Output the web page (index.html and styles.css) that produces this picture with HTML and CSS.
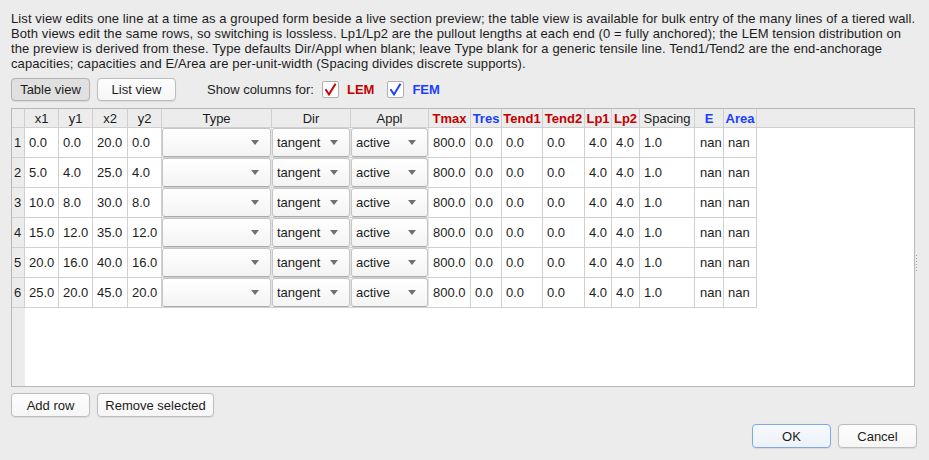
FILE: index.html
```html
<!DOCTYPE html><html lang="en"><head><meta charset="utf-8">
<meta name="viewport" content="width=device-width,initial-scale=1">
<title>Reinforcement lines</title>
<link rel="stylesheet" href="styles.css">
</head>
<body>
<div class="dialog">
  <p class="intro">List view edits one line at a time as a grouped form beside a live section preview; the table view is available for bulk entry of the many lines of a tiered wall.<br>Both views edit the same rows, so switching is lossless. Lp1/Lp2 are the pullout lengths at each end (0 = fully anchored); the LEM tension distribution on<br>the preview is derived from these. Type defaults Dir/Appl when blank; leave Type blank for a generic tensile line. Tend1/Tend2 are the end-anchorage<br>capacities; capacities and E/Area are per-unit-width (Spacing divides discrete supports).</p>

  <div class="toolbar">
    <button class="btn pressed">Table view</button>
    <button class="btn">List view</button>
    <span class="show-label">Show columns for:</span>
    <label class="chk lem">
      <span class="box"><svg width="15" height="15" viewBox="0 0 15 15"><path d="M2.5 7.2 L6 12.5 L12.5 1.8" fill="none" stroke="currentColor" stroke-width="2"/></svg></span>LEM
    </label>
    <label class="chk fem">
      <span class="box"><svg width="15" height="15" viewBox="0 0 15 15"><path d="M2.5 7.2 L6 12.5 L12.5 1.8" fill="none" stroke="currentColor" stroke-width="2"/></svg></span>FEM
    </label>
  </div>

  <div class="table-area">
    <div class="grid-frame">
      <div class="hdr">
        <div class="corner"></div>
        <div class="hc w-x1">x1</div><div class="hc w-y1">y1</div><div class="hc w-x2">x2</div><div class="hc w-y2">y2</div>
        <div class="hc w-type">Type</div><div class="hc w-dir">Dir</div><div class="hc w-appl">Appl</div>
        <div class="hc w-tmax lem-col">Tmax</div><div class="hc w-tres fem-col">Tres</div>
        <div class="hc w-tend1 lem-col">Tend1</div><div class="hc w-tend2 lem-col">Tend2</div>
        <div class="hc w-lp1 lem-col">Lp1</div><div class="hc w-lp2 lem-col">Lp2</div>
        <div class="hc w-spacing">Spacing</div><div class="hc w-e fem-col">E</div><div class="hc w-area fem-col">Area</div>
      </div>
      <div class="body">
        <div class="vhdr">
          <div class="rn">1</div><div class="rn">2</div><div class="rn">3</div>
          <div class="rn">4</div><div class="rn">5</div><div class="rn">6</div>
        </div>
        <div class="rows">
          <div class="row">
            <div class="c w-x1">0.0</div><div class="c w-y1">0.0</div><div class="c w-x2">20.0</div><div class="c w-y2">0.0</div>
            <div class="c w-type"><span class="combo"><span class="val"></span><i class="arr"></i></span></div>
            <div class="c w-dir"><span class="combo"><span class="val">tangent</span><i class="arr"></i></span></div>
            <div class="c w-appl"><span class="combo"><span class="val">active</span><i class="arr"></i></span></div>
            <div class="c w-tmax">800.0</div><div class="c w-tres">0.0</div><div class="c w-tend1">0.0</div><div class="c w-tend2">0.0</div>
            <div class="c w-lp1">4.0</div><div class="c w-lp2">4.0</div><div class="c w-spacing">1.0</div><div class="c w-e">nan</div><div class="c w-area">nan</div>
          </div>
          <div class="row">
            <div class="c w-x1">5.0</div><div class="c w-y1">4.0</div><div class="c w-x2">25.0</div><div class="c w-y2">4.0</div>
            <div class="c w-type"><span class="combo"><span class="val"></span><i class="arr"></i></span></div>
            <div class="c w-dir"><span class="combo"><span class="val">tangent</span><i class="arr"></i></span></div>
            <div class="c w-appl"><span class="combo"><span class="val">active</span><i class="arr"></i></span></div>
            <div class="c w-tmax">800.0</div><div class="c w-tres">0.0</div><div class="c w-tend1">0.0</div><div class="c w-tend2">0.0</div>
            <div class="c w-lp1">4.0</div><div class="c w-lp2">4.0</div><div class="c w-spacing">1.0</div><div class="c w-e">nan</div><div class="c w-area">nan</div>
          </div>
          <div class="row">
            <div class="c w-x1">10.0</div><div class="c w-y1">8.0</div><div class="c w-x2">30.0</div><div class="c w-y2">8.0</div>
            <div class="c w-type"><span class="combo"><span class="val"></span><i class="arr"></i></span></div>
            <div class="c w-dir"><span class="combo"><span class="val">tangent</span><i class="arr"></i></span></div>
            <div class="c w-appl"><span class="combo"><span class="val">active</span><i class="arr"></i></span></div>
            <div class="c w-tmax">800.0</div><div class="c w-tres">0.0</div><div class="c w-tend1">0.0</div><div class="c w-tend2">0.0</div>
            <div class="c w-lp1">4.0</div><div class="c w-lp2">4.0</div><div class="c w-spacing">1.0</div><div class="c w-e">nan</div><div class="c w-area">nan</div>
          </div>
          <div class="row">
            <div class="c w-x1">15.0</div><div class="c w-y1">12.0</div><div class="c w-x2">35.0</div><div class="c w-y2">12.0</div>
            <div class="c w-type"><span class="combo"><span class="val"></span><i class="arr"></i></span></div>
            <div class="c w-dir"><span class="combo"><span class="val">tangent</span><i class="arr"></i></span></div>
            <div class="c w-appl"><span class="combo"><span class="val">active</span><i class="arr"></i></span></div>
            <div class="c w-tmax">800.0</div><div class="c w-tres">0.0</div><div class="c w-tend1">0.0</div><div class="c w-tend2">0.0</div>
            <div class="c w-lp1">4.0</div><div class="c w-lp2">4.0</div><div class="c w-spacing">1.0</div><div class="c w-e">nan</div><div class="c w-area">nan</div>
          </div>
          <div class="row">
            <div class="c w-x1">20.0</div><div class="c w-y1">16.0</div><div class="c w-x2">40.0</div><div class="c w-y2">16.0</div>
            <div class="c w-type"><span class="combo"><span class="val"></span><i class="arr"></i></span></div>
            <div class="c w-dir"><span class="combo"><span class="val">tangent</span><i class="arr"></i></span></div>
            <div class="c w-appl"><span class="combo"><span class="val">active</span><i class="arr"></i></span></div>
            <div class="c w-tmax">800.0</div><div class="c w-tres">0.0</div><div class="c w-tend1">0.0</div><div class="c w-tend2">0.0</div>
            <div class="c w-lp1">4.0</div><div class="c w-lp2">4.0</div><div class="c w-spacing">1.0</div><div class="c w-e">nan</div><div class="c w-area">nan</div>
          </div>
          <div class="row">
            <div class="c w-x1">25.0</div><div class="c w-y1">20.0</div><div class="c w-x2">45.0</div><div class="c w-y2">20.0</div>
            <div class="c w-type"><span class="combo"><span class="val"></span><i class="arr"></i></span></div>
            <div class="c w-dir"><span class="combo"><span class="val">tangent</span><i class="arr"></i></span></div>
            <div class="c w-appl"><span class="combo"><span class="val">active</span><i class="arr"></i></span></div>
            <div class="c w-tmax">800.0</div><div class="c w-tres">0.0</div><div class="c w-tend1">0.0</div><div class="c w-tend2">0.0</div>
            <div class="c w-lp1">4.0</div><div class="c w-lp2">4.0</div><div class="c w-spacing">1.0</div><div class="c w-e">nan</div><div class="c w-area">nan</div>
          </div>
        </div>
      </div>
    </div>
    <div class="splitter"><i></i><i></i><i></i><i></i><i></i><i></i></div>
  </div>

  <div class="row-actions">
    <button class="btn add">Add row</button>
    <button class="btn remove">Remove selected</button>
  </div>

  <div class="dialog-buttons">
    <button class="btn default">OK</button>
    <button class="btn">Cancel</button>
  </div>
</div>
</body></html>
```

FILE: styles.css
```css
/* Qt-on-macOS style dialog */
:root{
  --win: #ececec;
  --grid: #d0d0d0;
  --frame: #b8b8b8;
  --text: #1c1c1c;
  --lem: #c40000;
  --fem: #1a3fff;
}
*{box-sizing:border-box}
body{margin:0;background:var(--win);color:var(--text);font-family:"Liberation Sans",Arial,sans-serif;font-size:13px}

.dialog{height:460px;padding:11px 12px 12px 11px;display:flex;flex-direction:column}
.intro{margin:0;line-height:15px;white-space:nowrap;letter-spacing:.1px}

.btn{
  font:inherit;color:var(--text);height:24px;padding:0;cursor:default;
  border:1px solid #bdbdbd;border-radius:4px;background:linear-gradient(#fdfdfd,#f6f6f6);
  box-shadow:0 .5px 1px rgba(0,0,0,.08);
}
.btn.pressed{background:#e0e0e0;border-color:#b3b3b3}
.btn.default{border-color:#7ea9e6;background:linear-gradient(#f6f9fd,#edf2f8)}

.toolbar{margin-top:7px;height:23px;display:flex;align-items:center}
.toolbar .btn{width:79px;height:23px;margin-right:7px}
.show-label{margin-left:24px}
.chk{display:flex;align-items:center;gap:8px;font-weight:bold;margin-left:8px}
.chk.fem{margin-left:13px}
.chk .box{
  width:17px;height:17px;display:flex;align-items:center;justify-content:center;
  background:#fff;border:1px solid #b0b0b0;border-radius:2px;
}
.chk.lem{color:var(--lem)}
.chk.fem{color:var(--fem)}

/* table */
.table-area{margin-top:7px;height:279px;display:flex}
.grid-frame{flex:0 0 904px;border:1px solid var(--frame);background:#fff;display:flex;flex-direction:column}
.hdr{display:flex;height:19px;background:#ececec;border-bottom:1px solid var(--grid)}
.corner{width:13px;border-right:1px solid var(--grid)}
.hc{text-align:center;line-height:19px;border-right:1px solid var(--grid);white-space:nowrap}
.hc.lem-col{color:var(--lem);font-weight:bold}
.hc.fem-col{color:var(--fem);font-weight:bold}

.body{flex:1;display:flex}
.vhdr{width:13px;background:#ececec}
.rn{height:30px;line-height:29px;padding-left:2px;border-right:1px solid var(--grid);border-bottom:1px solid var(--grid)}
.rows{display:flex;flex-direction:column}
.row{display:flex;height:30px}
.c{line-height:29px;padding-left:4px;white-space:nowrap;border-right:1px solid var(--grid);border-bottom:1px solid var(--grid)}

.w-x1{width:34px}.w-y1{width:34px}.w-x2{width:35px}.w-y2{width:34px}
.w-type{width:110px}.w-dir{width:79px}.w-appl{width:78px}
.w-tmax{width:42px}.w-tres{width:31px}.w-tend1{width:41px}.w-tend2{width:42px}
.w-lp1{width:27px}.w-lp2{width:28px}.w-spacing{width:55px}.w-e{width:29px}.w-area{width:33px}
.c.w-e{padding-left:5px}

.c.w-type,.c.w-dir,.c.w-appl{padding:0;border-right-color:#e4e4e4}
.combo{
  height:100%;display:flex;align-items:center;padding:0 11px 0 4px;
  border:1px solid #c6c6c6;border-bottom-color:#ababab;border-radius:3px;
  background:linear-gradient(#ffffff,#f4f4f4);
}
.combo .val{flex:1}
.arr{width:0;height:0;border-left:4.5px solid transparent;border-right:4.5px solid transparent;border-top:5px solid #707070}

.splitter{flex:1;display:flex;flex-direction:column;align-items:center;gap:2px;padding-top:147px}
.splitter i{width:1px;height:1px;background:#a0a0a0}

.row-actions{margin-top:6px;display:flex;gap:7px}
.row-actions .add{width:79px}
.row-actions .remove{width:117px}

.dialog-buttons{margin-top:7px;display:flex;justify-content:flex-end;gap:7px}
.dialog-buttons .btn{width:79px}
```
